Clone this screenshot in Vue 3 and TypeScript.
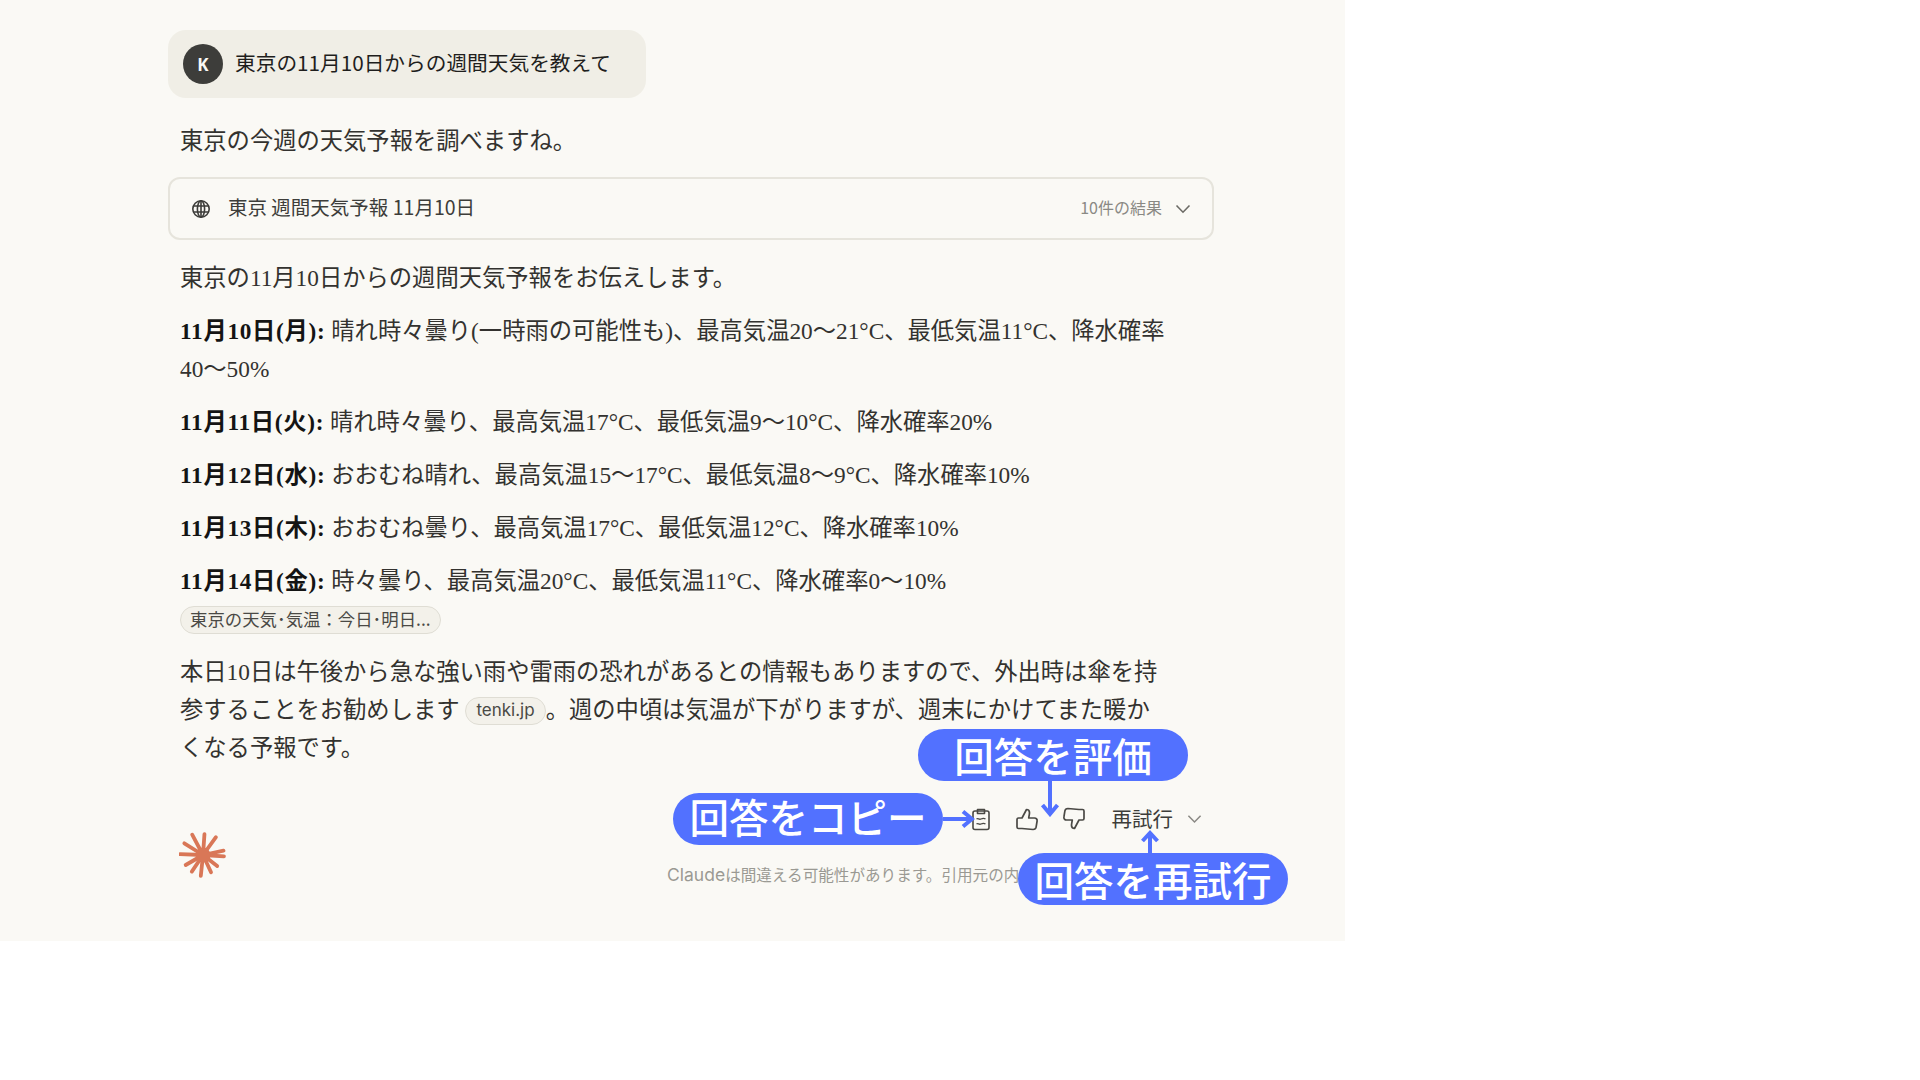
<script setup lang="ts">
interface Day { label: string; text: string }
interface Ray { angle: number; len: number }
const days: Day[] = [
  { label: '11月11日(火):', text: ' 晴れ時々曇り、最高気温17°C、最低気温9～10°C、降水確率20%' },
  { label: '11月12日(水):', text: ' おおむね晴れ、最高気温15～17°C、最低気温8～9°C、降水確率10%' },
  { label: '11月13日(木):', text: ' おおむね曇り、最高気温17°C、最低気温12°C、降水確率10%' },
  { label: '11月14日(金):', text: ' 時々曇り、最高気温20°C、最低気温11°C、降水確率0～10%' },
]
const rays: Ray[] = [
  { angle: 4, len: 21 }, { angle: 36, len: 22 }, { angle: 78, len: 21 }, { angle: 94, len: 21 },
  { angle: 128, len: 18 }, { angle: 155, len: 19 }, { angle: 186, len: 21 }, { angle: 214, len: 20 },
  { angle: 240, len: 20 }, { angle: 272, len: 23 }, { angle: 302, len: 22 }, { angle: 332, len: 23 },
]
</script>

<template>
  <div class="panel">
    <main class="col">
      <div class="bubble">
        <span class="avatar">K</span>
        <span class="bubble-text">東京の11月10日からの週間天気を教えて</span>
      </div>
      <p class="para intro">東京の今週の天気予報を調べますね。</p>
      <div class="search">
        <svg class="globe" viewBox="0 0 20 20" width="20" height="20" fill="none" stroke="#3d3d3a" stroke-width="1.6">
          <circle cx="10" cy="10" r="8.2" />
          <ellipse cx="10" cy="10" rx="3.6" ry="8.2" />
          <path d="M2 7h16M2 13h16M10 2v16" />
        </svg>
        <span class="search-text">東京 週間天気予報 11月10日</span>
        <span class="search-count">10件の結果</span>
        <svg class="chev" viewBox="0 0 16 10" width="16" height="10" fill="none" stroke="#6b6a65" stroke-width="1.6">
          <path d="M1.5 1.5 8 8.2l6.5-6.7" />
        </svg>
      </div>
      <p class="para after-search">東京の11月10日からの週間天気予報をお伝えします。</p>
      <p class="para"><b>11月10日(月):</b> 晴れ時々曇り(一時雨の可能性も)、最高気温20～21°C、最低気温11°C、降水確率<br />40～50%</p>
      <p v-for="d in days" :key="d.label" class="para"><b>{{ d.label }}</b>{{ d.text }}</p>
      <div class="chip-row"><span class="chip">東京の天気･気温：今日･明日...</span></div>
      <p class="para">本日10日は午後から急な強い雨や雷雨の恐れがあるとの情報もありますので、外出時は傘を持<br />参することをお勧めします <span class="chip inline">tenki.jp</span>。週の中頃は気温が下がりますが、週末にかけてまた暖か<br />くなる予報です。</p>

      <div class="foot">
        <svg class="logo" viewBox="-24 -24 48 48" width="48" height="48">
          <g stroke="#d97757" stroke-width="3.8" stroke-linecap="round">
            <line v-for="r in rays" :key="r.angle" x1="0" y1="0" x2="0" :y2="-r.len" :transform="`rotate(${r.angle})`" />
          </g>
          <circle r="7.5" fill="#d97757" />
        </svg>
        <div class="foot-right">
          <div class="actions">
            <svg class="ic" viewBox="0 0 20 24" width="20" height="24" fill="none" stroke="#4a4945" stroke-width="1.6" stroke-linejoin="round">
              <rect x="2" y="4" width="16" height="18.5" rx="2" />
              <path d="M6.5 6.5V2.5h7v4z" />
              <path d="M5.5 12c1.5-1.2 2.5 1 4.5 0s3-1 4.5 0M5.5 17c1.5-1.2 2.5 1 4.5 0s3-1 4.5 0" stroke-width="1.3" />
            </svg>
            <svg class="ic up" viewBox="0 0 24 24" width="24" height="24" fill="none" stroke="#4a4945" stroke-width="1.7" stroke-linejoin="round">
              <path d="M7 21.5H3.5A1.5 1.5 0 0 1 2 20v-7.5A1.5 1.5 0 0 1 3.5 11H7l4.5-8.5c1.8 0 3 1.4 3 3.2 0 1.3-.5 3.4-.8 5.3h5.8c1.7 0 2.9 1.4 2.6 3l-1 6.2c-.3 1.6-1.5 2.3-3 2.3z" />
            </svg>
            <svg class="ic down" viewBox="0 0 24 24" width="24" height="24" fill="none" stroke="#4a4945" stroke-width="1.7" stroke-linejoin="round">
              <path d="M17 2.5h3.5A1.5 1.5 0 0 1 22 4v7.5a1.5 1.5 0 0 1-1.5 1.5H17l-4.5 8.5c-1.8 0-3-1.4-3-3.2 0-1.3.5-3.4.8-5.3H4.5c-1.7 0-2.9-1.4-2.6-3l1-6.2c.3-1.6 1.5-2.3 3-2.3z" />
            </svg>
            <span class="retry">再試行</span>
            <svg class="chev2" viewBox="0 0 16 10" width="15" height="10" fill="none" stroke="#8a8984" stroke-width="1.6">
              <path d="M1.5 1.5 8 8.2l6.5-6.7" />
            </svg>
          </div>
          <p class="disclaimer"><span class="brand">Claude</span>は間違える可能性があります。引用元の内</p>
        </div>
      </div>
    </main>

    <div class="callout c-rate">回答を評価</div>
    <div class="callout c-copy">回答をコピー</div>
    <div class="callout c-retry">回答を再試行</div>
    <svg class="arrow a-copy" viewBox="0 0 32 20" width="32" height="20" fill="none" stroke="#5271ff" stroke-width="4">
      <path d="M0 10h29M20 2.5 29 10l-9 7.5" />
    </svg>
    <svg class="arrow a-rate" viewBox="0 0 20 36" width="20" height="36" fill="none" stroke="#5271ff" stroke-width="4">
      <path d="M10 0v33M2.5 24 10 33l7.5-9" />
    </svg>
    <svg class="arrow a-retry" viewBox="0 0 20 24" width="20" height="24" fill="none" stroke="#5271ff" stroke-width="4">
      <path d="M10 24V3M2.5 11 10 3l7.5 8" />
    </svg>
  </div>
</template>

<style>
html, body { background: #fff; }
</style>

<style scoped>
.panel {
  position: relative;
  box-sizing: border-box;
  width: 1345px;
  height: 941px;
  padding: 30px 0 0 168px;
  background: #faf9f5;
  overflow: hidden;
  font-family: "Liberation Serif", "Noto Sans CJK JP", serif;
  color: #33322f;
}
.col { width: 1046px; }
.bubble {
  display: inline-flex;
  align-items: center;
  box-sizing: border-box;
  width: 478px;
  height: 68px;
  padding-left: 15px;
  gap: 12px;
  background: #f0eee6;
  border-radius: 18px;
}
.avatar {
  width: 40px;
  height: 40px;
  border-radius: 50%;
  background: #3d3d3a;
  color: #faf9f5;
  font: 700 17px "Noto Sans", sans-serif;
  display: flex;
  align-items: center;
  justify-content: center;
}
.bubble-text {
  padding-bottom: 4px;
  font: 20.7px "Noto Sans CJK JP", sans-serif;
  color: #1f1e1d;
  white-space: nowrap;
}
.para {
  margin: 15px 0 0;
  padding-left: 12px;
  font-size: 23.3px;
  line-height: 38px;
  white-space: nowrap;
}
.para b { font-weight: 700; color: #141413; letter-spacing: 0.7px; }
.intro { margin-top: 24px; }
.search {
  display: flex;
  align-items: center;
  box-sizing: border-box;
  height: 63px;
  margin-top: 17px;
  padding: 0 21px;
  border: 2px solid #e6e4dc;
  border-radius: 12px;
  font-family: "Noto Sans CJK JP", sans-serif;
}
.after-search { margin-top: 19px; }
.search-text { margin-left: 17px; padding-bottom: 4px; font-size: 19.5px; color: #3d3d3a; }
.search-count { margin-left: auto; padding-bottom: 3px; font-size: 16px; color: #8a8984; }
.chev { margin-left: 13px; }
.chip-row { padding-left: 12px; margin-top: 6px; line-height: 0; }
.chip {
  display: inline-block;
  box-sizing: border-box;
  height: 28px;
  padding: 0 9px;
  border: 1px solid #dfddd4;
  border-radius: 14px;
  background: #f3f1ea;
  font: 17.4px/24px "Noto Sans CJK JP", sans-serif;
  color: #4a4945;
  white-space: nowrap;
}
.chip.inline {
  font-family: "Inter", "Noto Sans", sans-serif;
  font-size: 17px;
  padding: 0 10px;
  vertical-align: 2px;
}
.chip-row + .para { margin-top: 19px; }
.foot {
  display: flex;
  margin-top: 32px;
  padding-left: 11px;
}
.logo { flex: none; margin-top: 32px; }
.foot-right {
  flex: 1;
  display: flex;
  flex-direction: column;
  min-width: 0;
}
.actions {
  display: flex;
  align-items: center;
  justify-content: flex-end;
  height: 40px;
  padding-right: 12px;
}
.ic { flex: none; }
.up { margin-left: 24px; }
.down { margin-left: 23px; }
.retry {
  margin-left: 26px;
  padding-bottom: 2px;
  font: 20.5px "Noto Sans CJK JP", sans-serif;
  color: #3d3d3a;
}
.chev2 { margin-left: 14px; }
.disclaimer {
  margin: 24px 0 0 440px;
  font: 15.6px/24px "Inter", "Noto Sans CJK JP", sans-serif;
  color: #9a9993;
  white-space: nowrap;
}
.brand { font-size: 17.5px; }
.callout {
  position: absolute;
  box-sizing: border-box;
  height: 52px;
  border-radius: 26px;
  background: #5271ff;
  color: #fff;
  font: 500 39.5px/52px "Noto Sans CJK JP", sans-serif;
  text-align: center;
  white-space: nowrap;
}
.c-rate { left: 918px; top: 729px; width: 270px; }
.c-copy { left: 673px; top: 793px; width: 270px; line-height: 45px; }
.c-retry { left: 1018px; top: 853px; width: 270px; }
.arrow { position: absolute; }
.a-copy { left: 943px; top: 809px; }
.a-rate { left: 1040px; top: 781px; }
.a-retry { left: 1140px; top: 830px; }
</style>
